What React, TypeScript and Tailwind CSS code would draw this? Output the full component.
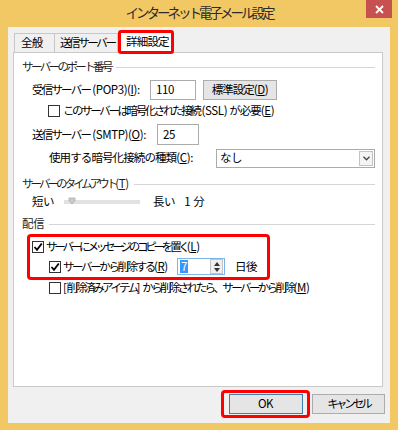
import React from "react";

const F = "font-['Noto_Sans_CJK_JP',sans-serif]";

function Check({ checked }: { checked?: boolean }) {
  return (
    <div className="w-[12px] h-[12px] border border-[#333] bg-white flex items-center justify-center shrink-0">
      {checked && (
        <svg width="10" height="10" viewBox="0 0 10 10">
          <path d="M1.5 5 L4 7.8 L8.8 1.5" stroke="#000" strokeWidth="1.8" fill="none" />
        </svg>
      )}
    </div>
  );
}

function Section({ children }: { children: React.ReactNode }) {
  return (
    <div className="h-[14px] flex items-center gap-[5px]">
      <span className="text-[#1e1e1e] whitespace-nowrap">{children}</span>
      <div className="flex-1 h-px bg-[#d5d5d5]" />
    </div>
  );
}

export default function App() {
  return (
    <div className={`w-[398px] h-[430px] bg-[#f1c863] flex flex-col text-[11.5px] tracking-[-0.4px] leading-none text-black ${F}`}>
      {/* title bar */}
      <div className="h-[27px] grid grid-cols-[1fr_auto_1fr] items-start">
        <div />
        <div className="pt-[6px] text-[13.5px] tracking-[-3px] text-[#2b2b2b] whitespace-nowrap">インターネット電子メール設定</div>
        <div className="flex justify-end pr-[6px]">
          <div className="w-[26px] h-[18px] bg-[#c75050] flex items-center justify-center">
            <svg width="9" height="9" viewBox="0 0 9 9">
              <path d="M1 1 L8 8 M8 1 L1 8" stroke="#fff" strokeWidth="1.8" />
            </svg>
          </div>
        </div>
      </div>

      {/* client */}
      <div className="mx-[8px] mb-[7px] flex-1 bg-[#f0f0f0] flex flex-col">
        {/* tabs */}
        <div className="h-[25px] pl-[6px] flex items-end">
          <div className="w-[41px] h-[19px] shrink-0 border border-b-0 border-[#c7c7c7] bg-[#f0f0f0] flex items-center pl-[6px] whitespace-nowrap tracking-[-0.8px]">
            全般
          </div>
          <div className="w-[63px] h-[19px] shrink-0 border border-b-0 border-l-0 border-[#c7c7c7] bg-[#f0f0f0] flex items-center pl-[5px] whitespace-nowrap tracking-[-2.4px]">
            送信サーバー
          </div>
          <div className="w-[56px] h-[24px] shrink-0 border-[3px] border-[#ff0000] rounded-[3px] bg-white flex items-center pl-[5px] mb-[-2px] relative z-10 whitespace-nowrap tracking-[-0.8px]">
            詳細設定
          </div>
        </div>

        {/* panel */}
        <div className="ml-[5px] mr-[7px] h-[335px] border border-[#cacaca] bg-white pl-[8px] pr-[7px] pt-[7px] flex flex-col">
          <Section>
            <span className="tracking-[-2.6px]">サーバーのポート番号</span>
          </Section>

          <div className="mt-[6px] h-[20px] flex items-center pl-[10px]">
            <span className="w-[118px] shrink-0 whitespace-nowrap">
              <span className="tracking-[-1.8px]">受信サーバー</span> (POP3)(<u>I</u>):
            </span>
            <div className="w-[46px] h-[20px] shrink-0 border border-[#ababab] flex items-center pl-[5px]">110</div>
            <div className="ml-[7px] w-[74px] h-[20px] shrink-0 border border-[#acacac] bg-[#e5e5e5] flex items-center justify-center whitespace-nowrap">
              <span className="tracking-[-1px]">標準設定</span>(<u>D</u>)
            </div>
          </div>

          <div className="mt-[4px] h-[14px] flex items-center pl-[26px] gap-[3px]">
            <Check />
            <span className="whitespace-nowrap">
              <span className="tracking-[-2.4px]">このサーバーは暗号化された接続</span> (SSL) <span className="tracking-[-1px]">が必要</span>(<u>E</u>)
            </span>
          </div>

          <div className="mt-[6px] h-[21px] flex items-center pl-[10px]">
            <span className="w-[125px] shrink-0 whitespace-nowrap">
              <span className="tracking-[-1.8px]">送信サーバー</span> (SMTP)(<u>O</u>):
            </span>
            <div className="w-[42px] h-[21px] shrink-0 border border-[#ababab] flex items-center pl-[5px]">25</div>
          </div>

          <div className="mt-[4px] h-[18px] flex items-center pl-[27px]">
            <span className="w-[167px] shrink-0 whitespace-nowrap">
              <span className="tracking-[-0.9px]">使用する暗号化接続の種類</span>(<u>C</u>):
            </span>
            <div className="w-[159px] h-[19px] shrink-0 border border-[#ababab] flex items-center justify-between pl-[3px] pr-[1px]">
              <span>なし</span>
              <div className="w-[14px] h-[15px] border border-[#c3c3c3] bg-[#f4f4f4] flex items-center justify-center">
                <svg width="7" height="5" viewBox="0 0 7 5">
                  <path d="M0.5 0.8 L3.5 3.8 L6.5 0.8" stroke="#444" strokeWidth="1.3" fill="none" />
                </svg>
              </div>
            </div>
          </div>

          <div className="mt-[10px]">
            <Section>
              <span className="tracking-[-3px]">サーバーのタイムアウト</span>(<u>T</u>)
            </Section>
          </div>

          <div className="mt-[4px] h-[14px] flex items-center pl-[10px]">
            <span className="w-[32px] shrink-0">短い</span>
            <div className="w-[76px] h-[4px] shrink-0 bg-[#e2e2e2] flex items-center">
              <svg width="8" height="8" viewBox="0 0 8 8" className="ml-[4px] mt-[-3px]">
                <path d="M1 1 H7 V4 L4 7 L1 4 Z" fill="#c9c9c9" stroke="#b0b0b0" strokeWidth="0.8" />
              </svg>
            </div>
            <span className="ml-[13px]">長い</span>
            <span className="ml-[9px] tracking-normal">1 分</span>
          </div>

          <div className="mt-[8px]">
            <Section>配信</Section>
          </div>

          <div className="mt-[3px] ml-[5px] w-[243px] h-[46px] border-[3px] border-[#ff0000] rounded-[4px] flex flex-col pt-[3px] pl-[2px]">
            <div className="h-[14px] flex items-center gap-[2px]">
              <Check checked />
              <span className="whitespace-nowrap">
                <span className="tracking-[-3.2px]">サーバーにメッセージのコピーを置く</span>(<u>L</u>)
              </span>
            </div>
            <div className="mt-[4px] h-[17px] flex items-center pl-[17px]">
              <div className="w-[128px] shrink-0 flex items-center gap-[2px]">
                <Check checked />
                <span className="whitespace-nowrap">
                  <span className="tracking-[-2.4px]">サーバーから削除する</span>(<u>R</u>)
                </span>
              </div>
              <div className="w-[48px] h-[17px] shrink-0 border border-[#7eb4ea] flex items-center pl-[2px] pr-[1px] justify-between">
                <span className="bg-[#3399ff] text-white px-[1px] h-[13px] flex items-center">7</span>
                <div className="w-[13px] h-[15px] border border-[#c3c3c3] bg-[#efefef] flex flex-col items-center justify-center gap-[2px]">
                  <svg width="6" height="4" viewBox="0 0 6 4"><path d="M0 4 L3 0 L6 4 Z" fill="#333" /></svg>
                  <svg width="6" height="4" viewBox="0 0 6 4"><path d="M0 0 L3 4 L6 0 Z" fill="#333" /></svg>
                </div>
              </div>
              <span className="ml-[10px]">日後</span>
            </div>
          </div>

          <div className="mt-[1px] h-[14px] flex items-center pl-[27px] gap-[2px]">
            <Check />
            <span className="whitespace-nowrap">
              [<span className="tracking-[-2.6px]">削除済みアイテム</span>] <span className="tracking-[-2.6px]">から削除されたら、サーバーから削除</span>(<u>M</u>)
            </span>
          </div>
        </div>

        {/* buttons */}
        <div className="mt-[3px] flex items-center justify-end pr-[5px]">
          <div className="w-[89px] h-[28px] border-[3px] border-[#ff0000] rounded-[4px] flex items-center justify-center">
            <div className="w-[74px] h-[20px] border border-[#3c7fb1] bg-[#e5e5e5] flex items-center justify-center">OK</div>
          </div>
          <div className="ml-[2px] w-[73px] h-[20px] border border-[#acacac] bg-[#e5e5e5] flex items-center justify-center tracking-[-3px]">
            キャンセル
          </div>
        </div>
      </div>
    </div>
  );
}
